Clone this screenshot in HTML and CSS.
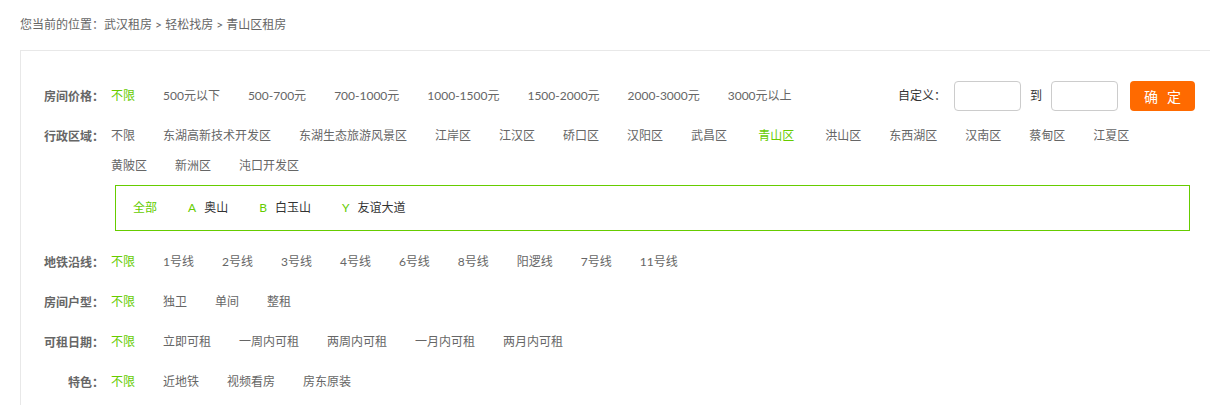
FILE: index.html
```html
<!DOCTYPE html>
<html lang="zh-CN">
<head>
  <meta charset="UTF-8">
  <title>青山区租房</title>
  <link rel="stylesheet" href="styles.css">
</head>
<body>

  <div class="crumb">您当前的位置<span class="colon">：</span><a href="#">武汉租房</a> &gt; <a href="#">轻松找房</a> &gt; <a href="#">青山区租房</a></div>

  <div class="filter">

    <div class="row price">
      <div class="label">房间价格<span class="colon">：</span></div>
      <ul class="opts">
        <li class="on">不限</li>
        <li>500元以下</li>
        <li>500-700元</li>
        <li>700-1000元</li>
        <li>1000-1500元</li>
        <li>1500-2000元</li>
        <li>2000-3000元</li>
        <li>3000元以上</li>
      </ul>
      <div class="custom">
        <span class="custom-txt">自定义<span class="colon">：</span></span>
        <input type="text" class="num first">
        <span class="to">到</span>
        <input type="text" class="num">
        <button class="ok">确 定</button>
      </div>
    </div>

    <div class="row area">
      <div class="label">行政区域<span class="colon">：</span></div>
      <div class="body">
        <ul class="opts">
          <li>不限</li>
          <li>东湖高新技术开发区</li>
          <li>东湖生态旅游风景区</li>
          <li>江岸区</li>
          <li>江汉区</li>
          <li>硚口区</li>
          <li>汉阳区</li>
          <li>武昌区</li>
          <li class="on">青山区</li>
          <li>洪山区</li>
          <li>东西湖区</li>
          <li>汉南区</li>
          <li>蔡甸区</li>
          <li>江夏区</li>
          <li>黄陂区</li>
          <li>新洲区</li>
          <li>沌口开发区</li>
        </ul>
        <div class="sub">
          <span class="sub-item on">全部</span>
          <span class="sub-item"><em>A</em>奥山</span>
          <span class="sub-item"><em>B</em>白玉山</span>
          <span class="sub-item"><em>Y</em>友谊大道</span>
        </div>
      </div>
    </div>

    <div class="row">
      <div class="label">地铁沿线<span class="colon">：</span></div>
      <ul class="opts">
        <li class="on">不限</li>
        <li>1号线</li>
        <li>2号线</li>
        <li>3号线</li>
        <li>4号线</li>
        <li>6号线</li>
        <li>8号线</li>
        <li>阳逻线</li>
        <li>7号线</li>
        <li>11号线</li>
      </ul>
    </div>

    <div class="row">
      <div class="label">房间户型<span class="colon">：</span></div>
      <ul class="opts">
        <li class="on">不限</li>
        <li>独卫</li>
        <li>单间</li>
        <li>整租</li>
      </ul>
    </div>

    <div class="row">
      <div class="label">可租日期<span class="colon">：</span></div>
      <ul class="opts">
        <li class="on">不限</li>
        <li>立即可租</li>
        <li>一周内可租</li>
        <li>两周内可租</li>
        <li>一月内可租</li>
        <li>两月内可租</li>
      </ul>
    </div>

    <div class="row">
      <div class="label">特色<span class="colon">：</span></div>
      <ul class="opts">
        <li class="on">不限</li>
        <li>近地铁</li>
        <li>视频看房</li>
        <li>房东原装</li>
      </ul>
    </div>

  </div>

</body>
</html>
```

FILE: styles.css
```css
body {
  font-family: Lato, "Noto Sans CJK SC", sans-serif;
  font-size: 12px;
  color: #666;
  margin: 0;
  padding: 0;
  overflow: hidden;
  background: #fff;
}
ul {
  list-style: none;
  margin: 0;
  padding: 0;
}
a {
  color: #666;
  text-decoration: none;
}
/* full-width colon centred in its box, like YaHei */
.colon {
  font-family: "Noto Sans CJK TC", sans-serif;
}
.crumb {
  padding: 14px 20px 16px;
  height: 20px;
  line-height: 20px;
}
.filter {
  margin-left: 20px;
  border-top: 1px solid #e8e8e8;
  border-left: 1px solid #e8e8e8;
  padding-top: 25px;
  height: 400px;
}
.row {
  display: flex;
  align-items: flex-start;
  padding: 5px 15px 5px 0;
  line-height: 30px;
}
.label {
  flex: 0 0 83px;
  height: 30px;
  text-align: right;
  font-weight: bold;
  color: #666;
}
.opts {
  display: flex;
  flex-wrap: wrap;
  margin-left: 7px;
}
.row > .opts {
  flex: 1;
}
.opts li {
  height: 30px;
  margin-right: 28px;
  white-space: nowrap;
  cursor: pointer;
}
.opts li.on {
  color: #66cc00;
}
.body {
  flex: 1;
}
.area .opts li.on {
  padding: 0 3px;
}
.sub {
  display: flex;
  margin: 4px 5px 6px 11px;
  border: 1px solid #66cc00;
  height: 44px;
  line-height: 44px;
  padding-left: 17px;
}
.sub-item {
  margin-right: 31px;
  color: #333;
}
.sub-item.on {
  color: #66cc00;
}
.sub-item em {
  font-style: normal;
  color: #66cc00;
  margin-right: 8px;
}
.custom {
  display: flex;
  align-items: center;
  height: 30px;
  color: #333;
}
.custom-txt {
  margin-top: -2px;
}
.num {
  width: 65px;
  height: 28px;
  padding: 0;
  border: 1px solid #ccc;
  border-radius: 4px;
}
.num.first {
  margin-left: 8px;
}
.to {
  margin: 0 9px 0 9px;
}
.ok {
  width: 65px;
  height: 30px;
  margin-left: 12px;
  border: none;
  border-radius: 4px;
  background-color: #ff6a00;
  color: #fff;
  font-family: "Noto Sans CJK SC", sans-serif;
  font-size: 14px;
  letter-spacing: 3px;
  padding: 0 0 0 3px;
  cursor: pointer;
}
```
